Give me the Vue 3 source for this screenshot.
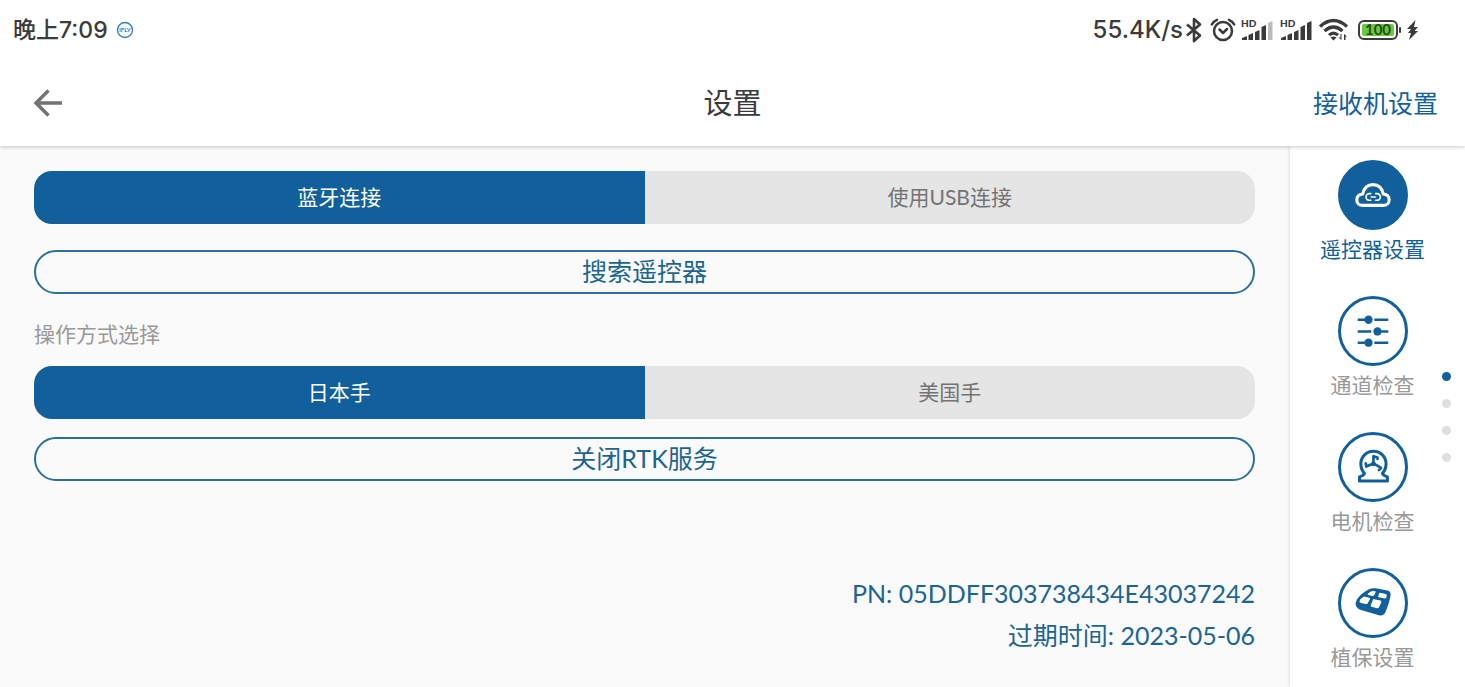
<script setup>
import { ref } from 'vue'

const connection = ref('bluetooth')
const hand = ref('japan')
const section = ref('remote')

const connections = [
  { id: 'bluetooth', label: '蓝牙连接' },
  { id: 'usb', label: '使用USB连接' },
]
const hands = [
  { id: 'japan', label: '日本手' },
  { id: 'america', label: '美国手' },
]
const sections = [
  { id: 'remote', label: '遥控器设置' },
  { id: 'channel', label: '通道检查' },
  { id: 'motor', label: '电机检查' },
  { id: 'plant', label: '植保设置' },
]
</script>

<template>
  <div class="screen">
    <div class="status">
      <div class="status-left">
        <span class="clock">晚上7:09</span>
        <svg class="badge" viewBox="0 0 18 18" aria-hidden="true">
          <circle cx="9" cy="9" r="7.500" fill="#f3f9fd" stroke="#3f7fae" stroke-width="1.400" />
          <text x="9" y="11" text-anchor="middle" font-size="6" font-weight="700" fill="#3f7fae">iFLY</text>
        </svg>
      </div>
      <div class="status-right">
        <span class="speed">55.4K/s</span>
        <svg class="bluetooth" viewBox="0 0 18 26" aria-hidden="true">
          <path d="M2 7.500l13 11-6 5.500V2l6 5.500-13 11" fill="none" stroke="#3b3b3b" stroke-width="2.600" stroke-linejoin="round" />
        </svg>
        <svg class="alarm" viewBox="0 0 26 26" aria-hidden="true">
          <g fill="none" stroke="#3b3b3b" stroke-width="2.500" stroke-linecap="round" stroke-linejoin="round">
            <circle cx="13" cy="14" r="9" />
            <path d="M1.800 7.500Q3.500 4.200 7 2.800M24.200 7.500Q22.500 4.200 19 2.800M9.500 12.500l3.500 3.500 4-4" />
          </g>
        </svg>
        <svg v-for="n in 2" :key="n" class="signal" viewBox="0 0 34 24" aria-hidden="true">
          <text x="0" y="9" font-size="10" font-weight="900" fill="#3b3b3b">HD</text>
          <g fill="#3b3b3b">
            <path d="M1 22v-2l5-2v4zM7.500 22v-5l4.500-2v7zM14 22v-8l4.500-2v10zM20.500 22V9l4.500-2v15z" />
            <path d="M27 22V5l4.500-2v19z" :opacity="n === 1 ? 0.35 : 1" />
          </g>
        </svg>
        <svg class="wifi" viewBox="0 0 30 24" aria-hidden="true">
          <g fill="none" stroke="#3b3b3b" stroke-width="3.200">
            <path d="M1 8.500Q14.500-3.500 28 8.500M5.500 13Q14.500 5 23.500 13M10 17.200Q14.500 13 19 17.200" />
          </g>
          <path d="M11.500 19.500q3-2 6 0l-3 3zM22.500 16v6l-3-2.500h2V16zM25 22v-6l3 2.500h-1.500V22z" fill="#3b3b3b" />
        </svg>
        <svg class="battery" viewBox="0 0 44 20" aria-hidden="true">
          <rect x="1" y="1" width="38" height="18" rx="5" fill="#fff" stroke="#3b3b3b" stroke-width="2" />
          <rect x="4" y="4" width="32" height="12" rx="2" fill="#69c93f" />
          <rect x="41" y="7" width="2" height="6" rx="1" fill="#3b3b3b" />
          <text x="20" y="15" text-anchor="middle" font-size="15" font-weight="700" fill="#254c18">100</text>
        </svg>
        <svg class="bolt" viewBox="0 0 12 20" aria-hidden="true">
          <path d="M8.500 0L0 9h4L1 13h3l-2 7 9-9H7.500L11 7H7z" fill="#3b3b3b" />
        </svg>
      </div>
    </div>

    <header class="bar">
      <button class="back" type="button" aria-label="返回">
        <svg viewBox="0 0 30 28" aria-hidden="true">
          <path d="M29 14H3M15.500 1.500L3 14l12.500 12.500" fill="none" stroke="#737373" stroke-width="3.500" />
        </svg>
      </button>
      <h1>设置</h1>
      <a class="receiver" href="#receiver">接收机设置</a>
    </header>

    <div class="body">
      <main>
        <div class="segment" role="group" aria-label="连接方式">
          <button
            v-for="c in connections" :key="c.id" type="button"
            :class="{ on: connection === c.id }" :aria-pressed="connection === c.id"
            @click="connection = c.id"
          >{{ c.label }}</button>
        </div>
        <button class="outline search" type="button">搜索遥控器</button>
        <p id="hand-label" class="caption">操作方式选择</p>
        <div class="segment" role="group" aria-labelledby="hand-label">
          <button
            v-for="h in hands" :key="h.id" type="button"
            :class="{ on: hand === h.id }" :aria-pressed="hand === h.id"
            @click="hand = h.id"
          >{{ h.label }}</button>
        </div>
        <button class="outline rtk" type="button">关闭RTK服务</button>
        <div class="info">
          <p>PN: 05DDFF303738434E43037242</p>
          <p>过期时间: 2023-05-06</p>
        </div>
      </main>

      <aside>
        <nav>
          <button
            v-for="s in sections" :key="s.id" type="button" class="item"
            :class="{ active: section === s.id }" @click="section = s.id"
          >
            <span class="disc">
              <svg v-if="s.id === 'remote'" viewBox="0 0 40 40" aria-hidden="true">
                <g fill="none" stroke="currentColor" stroke-linecap="round" stroke-linejoin="round">
                  <path d="M9 31.500C4.500 31.500 2 29 2 25.500s2.500-6 6.500-6.500C10 12 14.500 8.500 20 8.500s10 3.500 11.500 10.500c4 .5 6.500 3 6.500 6.500s-2.500 6-7 6z" stroke-width="3.400" />
                  <path d="M17.500 18.500H16a3.700 3.700 0 0 0 0 7.400h1.500M23 18.500h1.500a3.700 3.700 0 0 1 0 7.400H23M18 22.200h4.500" stroke-width="1.800" />
                </g>
              </svg>
              <svg v-else-if="s.id === 'channel'" viewBox="0 0 40 40" aria-hidden="true">
                <path d="M3 7.500H11M21.500 7.500H37M3 20.500h15M29 20.500h8M3 33H11M21.500 33H37" stroke="currentColor" stroke-width="2.800" />
                <g fill="currentColor">
                  <circle cx="15" cy="7.500" r="4.600" />
                  <circle cx="25" cy="20.500" r="4.600" />
                  <circle cx="15" cy="33" r="4.600" />
                </g>
              </svg>
              <svg v-else-if="s.id === 'motor'" viewBox="0 0 40 40" aria-hidden="true">
                <g fill="none" stroke="currentColor" stroke-linejoin="round" stroke-linecap="round">
                  <path d="M10.500 27C7.500 24 6.500 20 6.500 16.500a14 14 0 0 1 28 0C34.500 20 33.500 24 30.500 27Q31 29.500 36 31v4.500H5V31Q10 29.500 10.500 27z" stroke-width="3.400" />
                  <path d="M20.500 16V8l4.500 1.500v1.500M20.500 16l-8 3.500-.5-3.500M20.500 16l8.500 5-2.500 2.500" stroke-width="3" />
                  <circle cx="20.500" cy="16.500" r="1.600" stroke-width="2" />
                </g>
              </svg>
              <svg v-else viewBox="0 0 40 40" aria-hidden="true">
                <path d="M15 5q3.500-2 8-1.300l13 2.500q4 1 3.500 5-1 8-5.500 18.500-2 5-7.500 4L6 27.500Q-.5 24.500 1 19 3.500 11 15 5z" fill="currentColor" />
                <path d="M17 7.500q2.500-1.300 5.500-.5.800.4.400 1.300l-1.700 3q-.8 1-2 .8l-4.500-.9q-1.200-.5-.4-1.400zM27.500 8.700l6.700 1.300q1.400.5 1.200 1.800l-.6 2q-.6 1.500-2 1.200l-6.300-1.300q-1.200-.5-.7-1.500l1-2.700q.3-.8.700-.8zM10 12.800l5.800 1.300q1.300.4.800 1.600l-2.500 4.500q-.8 1.200-2.200.9l-6-1.500q-1.300-.5-.8-1.800 1.200-3 4.900-5zM21.300 15.700l7 1.500q1.400.5 1 1.900l-2.600 5.500q-.8 1.500-2.300 1.200l-5.900-1.500q-1.400-.5-1-1.900l2.200-5.400q.5-1.400 1.600-1.300z" fill="#fff" />
              </svg>
            </span>
            <span class="name">{{ s.label }}</span>
          </button>
        </nav>
        <div class="dots" aria-hidden="true">
          <i v-for="s in sections" :key="s.id" :class="{ current: section === s.id }"></i>
        </div>
      </aside>
    </div>
  </div>
</template>

<style>
body {
  background: #fafafa;
}
</style>

<style scoped>
.screen {
  min-height: 100vh;
  display: flex;
  flex-direction: column;
  font-family: Lato, "Noto Sans CJK SC", sans-serif;
  color: #3b3b3b;
}
button {
  font: inherit;
  border: 0;
  padding: 0;
  margin: 0;
  background: none;
  cursor: pointer;
}
p, h1 {
  margin: 0;
  font-weight: 400;
}
svg {
  display: block;
}
.status {
  position: relative;
  z-index: 2;
  height: 60px;
  display: flex;
  align-items: center;
  justify-content: space-between;
  padding: 0 46px 0 13px;
  background: #fff;
}
.status-left, .status-right {
  display: flex;
  align-items: center;
}
.status-left {
  gap: 8px;
}
.clock {
  font-family: Inter, "Noto Sans CJK SC", sans-serif;
  font-size: 23px;
  line-height: 32px;
  font-weight: 500;
}
.badge {
  width: 18px;
  height: 18px;
}
.speed {
  font-family: Inter, sans-serif;
  font-size: 24px;
  line-height: 32px;
  font-weight: 500;
}
.bluetooth {
  width: 18px;
  height: 26px;
  margin-left: 2px;
}
.alarm {
  width: 26px;
  height: 26px;
  margin-left: 7px;
}
.signal {
  width: 34px;
  height: 24px;
  margin-left: 5px;
}
.wifi {
  width: 30px;
  height: 24px;
  margin-left: 5px;
}
.battery {
  width: 44px;
  height: 20px;
  margin-left: 9px;
}
.bolt {
  width: 12px;
  height: 20px;
  margin-left: 5px;
}
.bar {
  position: relative;
  z-index: 1;
  height: 86px;
  display: grid;
  grid-template-columns: 1fr auto 1fr;
  align-items: center;
  padding: 0 27px;
  box-sizing: border-box;
  background: #fff;
  box-shadow: 0 1px 4px rgba(0, 0, 0, 0.22);
}
.back {
  justify-self: start;
  padding-left: 6px;
}
.back svg {
  width: 30px;
  height: 28px;
}
h1 {
  font-size: 29px;
  line-height: 40px;
}
.receiver {
  justify-self: end;
  padding-bottom: 2px;
  font-size: 25px;
  color: #11609b;
  text-decoration: none;
}
.body {
  flex: 1;
  display: flex;
}
main {
  flex: 1;
  display: flex;
  flex-direction: column;
  padding: 25px 35px 30px 34px;
  background: #fafafa;
}
.segment {
  display: flex;
  height: 53px;
  border-radius: 18px;
  overflow: hidden;
  background: #e5e5e5;
}
.segment button {
  flex: 1;
  padding-bottom: 3px;
  font-size: 21px;
  color: #737373;
}
.segment .on {
  background: #11609b;
  color: #fff;
}
.outline {
  height: 44px;
  padding-bottom: 2px;
  border: 2px solid #2a7099;
  border-radius: 22px;
  font-size: 25px;
  line-height: 36px;
  color: #1d6591;
}
.search {
  margin-top: 26px;
}
.rtk {
  margin-top: 18px;
}
.caption {
  margin: 25px 0 17px;
  font-size: 21px;
  line-height: 30px;
  color: #999;
}
.info {
  margin-top: 91px;
  text-align: right;
  font-size: 25px;
  line-height: 42px;
  color: #1d6591;
}
aside {
  width: 175px;
  display: flex;
  align-items: center;
  background: #fff;
  box-shadow: 0 0 4px rgba(0, 0, 0, 0.18);
}
nav {
  flex: 1;
  align-self: flex-start;
  display: flex;
  flex-direction: column;
  gap: 30px;
  padding: 14px 0 10px 22px;
}
.item {
  display: flex;
  flex-direction: column;
  align-items: center;
  height: 106px;
  color: #11609b;
}
.disc {
  width: 70px;
  height: 70px;
  box-sizing: border-box;
  display: grid;
  place-items: center;
  border: 3px solid #11609b;
  border-radius: 50%;
}
.disc svg {
  width: 36px;
  height: 36px;
}
.active .disc {
  background: #11609b;
  color: #fff;
}
.name {
  margin-top: 4px;
  font-size: 21px;
  line-height: 30px;
  white-space: nowrap;
  color: #999;
}
.active .name {
  color: #11609b;
}
.dots {
  display: flex;
  flex-direction: column;
  gap: 18px;
  padding: 0 14px 0 9px;
}
.dots i {
  width: 9px;
  height: 9px;
  border-radius: 50%;
  background: #dedede;
}
.dots .current {
  background: #11609b;
}
</style>
